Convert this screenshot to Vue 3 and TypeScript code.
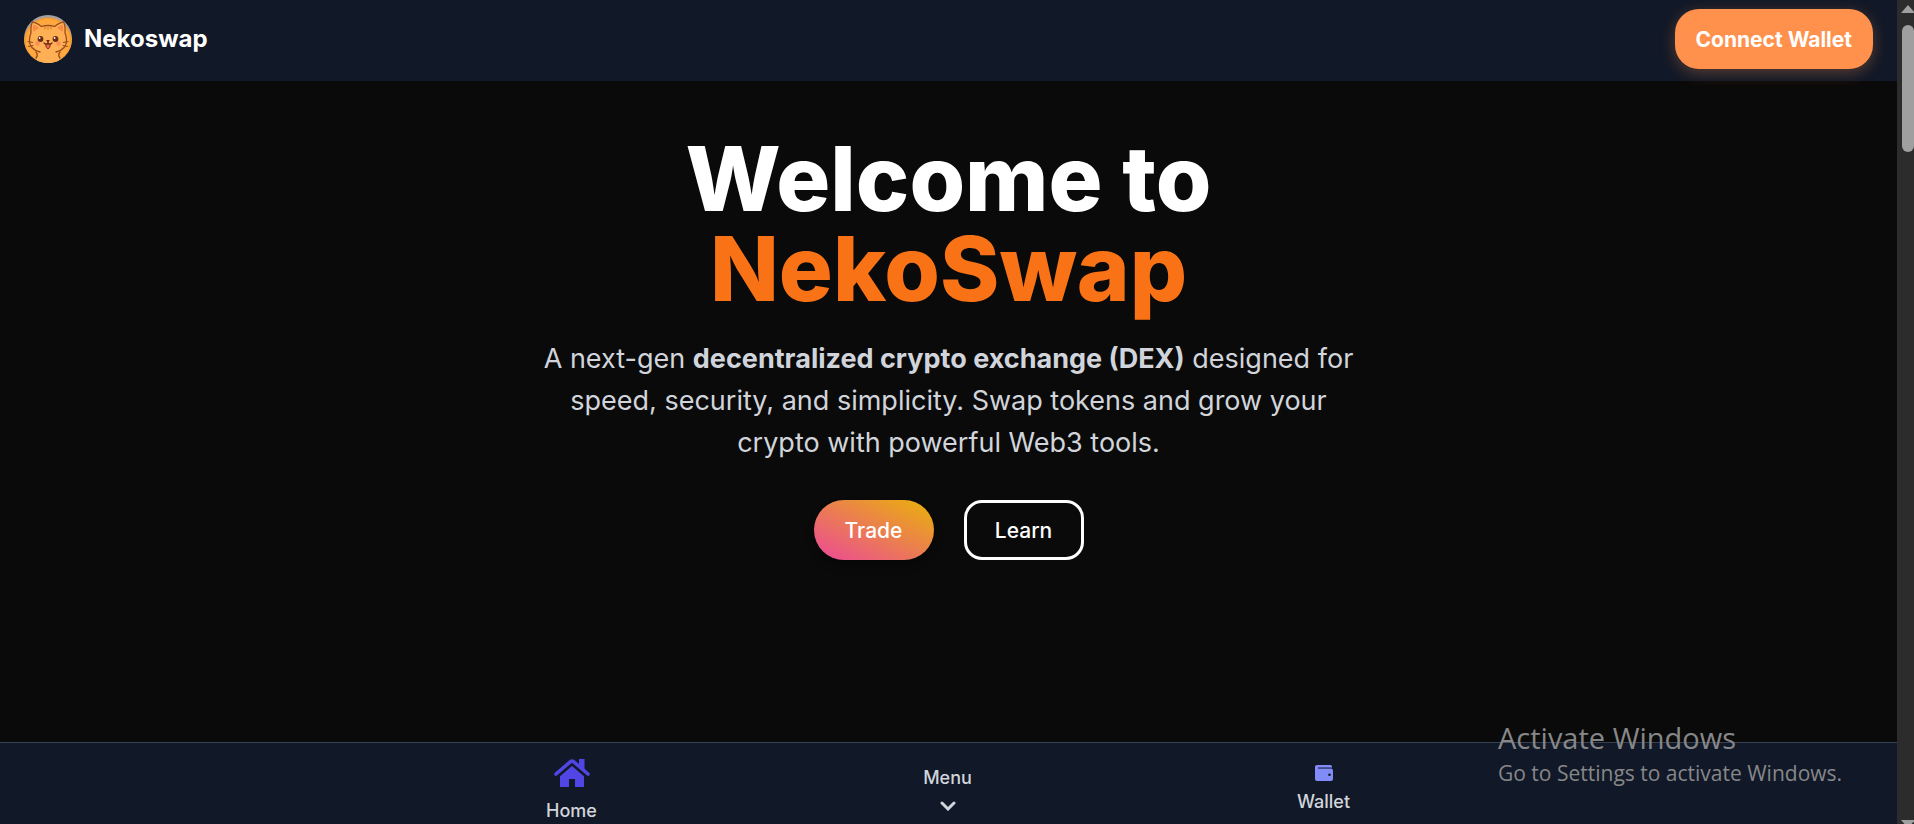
<script setup lang="ts">
interface NavItem {
  id: string
  label: string
}

const navItems: NavItem[] = [
  { id: 'home', label: 'Home' },
  { id: 'menu', label: 'Menu' },
  { id: 'wallet', label: 'Wallet' },
]
</script>

<template>
  <div class="shell">
    <div class="page">
      <header class="topbar">
        <a class="brand" href="#">
          <svg class="logo" viewBox="0 0 48 48" aria-hidden="true">
            <defs>
              <clipPath id="logo-clip"><circle cx="24" cy="24" r="24" /></clipPath>
            </defs>
            <g clip-path="url(#logo-clip)">
              <rect width="48" height="48" fill="#a3a09d" />
              <circle cx="24" cy="26.500" r="24" fill="#f99a30" />
              <circle cx="24" cy="26" r="22" fill="#ffa840" />
              <path d="M12 48 Q14 42 12 37 H36 Q34 42 36 48Z" fill="#ffb055" />
              <path d="M12 43 Q14.500 40 12 37 M36 43 Q33.500 40 36 37" fill="none" stroke="#9a4e1a" stroke-width="1.400" stroke-linecap="round" />
              <path d="M16 37 Q5 34 5.500 25 Q5.500 21 7 18 Q6.500 11 8.500 6.800 Q13.500 8 17.500 11.500 Q24 9.500 30.500 11.500 Q34.500 8 39.500 6.800 Q41.500 11 41 18 Q42.500 21 42.500 25 Q43 34 32 37Z" fill="#ffb055" />
              <path d="M16 37 Q5 34 5.500 25 Q5.500 21 7 18 Q6.500 11 8.500 6.800 Q13.500 8 17.500 11.500 Q24 9.500 30.500 11.500 Q34.500 8 39.500 6.800 Q41.500 11 41 18 Q42.500 21 42.500 25 Q43 34 32 37" fill="none" stroke="#9a4e1a" stroke-width="1.300" stroke-linejoin="round" stroke-linecap="round" />
              <path d="M9 17 Q8.500 12 9.500 9.500 Q13 10.500 15 13Z M39 17 Q39.500 12 38.500 9.500 Q35 10.500 33 13Z" fill="#fb8a48" />
              <path d="M21 12 V14.500 M24 11.500 V15 M27 12 V14.500" fill="none" stroke="#e8842a" stroke-width="1.300" />
              <circle cx="13.500" cy="28.500" r="2.200" fill="#ff8a5a" />
              <circle cx="34.500" cy="28.500" r="2.200" fill="#ff8a5a" />
              <circle cx="16.500" cy="24" r="2.900" fill="#6b2d12" />
              <circle cx="31.500" cy="24" r="2.900" fill="#6b2d12" />
              <circle cx="15.600" cy="23" r="0.900" fill="#fff" />
              <circle cx="30.600" cy="23" r="0.900" fill="#fff" />
              <path d="M21.500 29 Q22 33.500 24 34 Q26 33.500 26.500 29Z" fill="#f2604a" stroke="#6b2d12" stroke-width="0.800" />
              <path d="M23 25.500 H25 L24 27Z M20 28 Q22.500 30.500 24 27.500 Q25.500 30.500 28 28" fill="none" stroke="#6b2d12" stroke-width="1.200" stroke-linejoin="round" stroke-linecap="round" />
              <path d="M4 26.500 L8.500 27.500 M4.500 31.500 L9 30.500 M44 26.500 L39.500 27.500 M43.500 31.500 L39 30.500" stroke="#9a4e1a" stroke-width="1.200" stroke-linecap="round" />
            </g>
          </svg>
          <span>Nekoswap</span>
        </a>
        <button class="connect" type="button">Connect Wallet</button>
      </header>

      <main class="hero">
        <h1>Welcome to<br /><span class="accent">NekoSwap</span></h1>
        <p>
          A next-gen <strong>decentralized crypto exchange (DEX)</strong> designed for
          speed, security, and simplicity. Swap tokens and grow your crypto with
          powerful Web3 tools.
        </p>
        <div class="actions">
          <button class="trade" type="button">Trade</button>
          <button class="learn" type="button">Learn</button>
        </div>
      </main>

      <nav class="bottom" aria-label="Main">
        <div class="items">
          <button v-for="item in navItems" :key="item.id" type="button" :class="['item', item.id]">
            <svg v-if="item.id === 'home'" class="home-icon" viewBox="0 0 36 28" aria-hidden="true">
              <path d="M2 15 L16.500 2.700 Q18 1.500 19.500 2.700 L34 15" fill="none" stroke="#4f46e5" stroke-width="3.600" stroke-linecap="round" stroke-linejoin="round" />
              <path d="M25 0 H30.500 V11 L25 6.500Z" fill="#4f46e5" />
              <path d="M18 7 L30 17.200 V28 H21 V20 H15 V28 H6 V17.200Z" fill="#4f46e5" />
            </svg>
            <svg v-if="item.id === 'wallet'" class="wallet-icon" viewBox="0 0 18 16" aria-hidden="true">
              <path d="M2 0 H15.500 Q17 0 17 1.500 V2 H3 V3.800 H16 Q18 3.800 18 5.500 V14 Q18 16 16 16 H2 Q0 16 0 14 V2 Q0 0 2 0Z" fill="#818cf8" />
              <path d="M3 2 H17 V3.800 H3Z" fill="#4a5196" />
              <circle cx="14.500" cy="9.700" r="1.300" fill="#111827" />
            </svg>
            <span>{{ item.label }}</span>
            <svg v-if="item.id === 'menu'" class="chevron" viewBox="0 0 16 10" aria-hidden="true">
              <path d="M2 2 L8 8 L14 2" fill="none" stroke="#d1d5db" stroke-width="3" stroke-linecap="round" stroke-linejoin="miter" />
            </svg>
          </button>
        </div>
      </nav>
    </div>

    <div class="scrollbar" aria-hidden="true">
      <svg class="arrow" viewBox="0 0 13 8"><path d="M0 8 L7 0 L14 8Z" fill="#9f9f9f" /></svg>
      <div class="thumb"></div>
      <svg class="arrow down" viewBox="0 0 13 4"><path d="M0 0 H14 L7 8Z" fill="#9f9f9f" /></svg>
    </div>

    <aside class="activation">
      <div class="activation-title">Activate Windows</div>
      <div class="activation-text">Go to Settings to activate Windows.</div>
    </aside>
  </div>
</template>

<style>
body {
  margin: 0;
  background: #0a0a0a;
}
</style>

<style scoped>
.shell {
  position: relative;
  display: flex;
  height: 100vh;
  overflow: hidden;
  font-family: Inter, "Liberation Sans", sans-serif;
  color: #fff;
}

.page {
  flex: 1;
  min-width: 0;
  display: flex;
  flex-direction: column;
  background: #0a0a0a;
}

button {
  font-family: inherit;
  margin: 0;
  cursor: pointer;
}

.topbar {
  display: flex;
  align-items: center;
  justify-content: space-between;
  padding: 9px 24px 12px;
  background: #111827;
}

.brand {
  display: flex;
  align-items: center;
  gap: 12px;
  color: #fff;
  text-decoration: none;
  font-size: 24px;
  line-height: 36px;
  font-weight: 700;
}

.logo {
  width: 48px;
  height: 48px;
}

.connect {
  height: 60px;
  padding: 0 21px;
  border: 0;
  border-radius: 24px;
  background: #ff914d;
  color: #fff;
  font-size: 21px;
  font-weight: 700;
  box-shadow: 0 4px 15px rgba(255, 145, 77, 0.3);
}

.hero {
  flex: 1;
  display: flex;
  flex-direction: column;
  align-items: center;
  padding: 53px 24px 0;
  text-align: center;
}

h1 {
  margin: 0;
  font-size: 90px;
  line-height: 90px;
  font-weight: 800;
}

.accent {
  color: #f97316;
}

p {
  max-width: 840px;
  margin: 24px 0 0;
  color: #d1d5db;
  font-size: 27px;
  line-height: 42px;
}

.actions {
  display: flex;
  gap: 30px;
  margin-top: 36px;
}

.actions button {
  width: 120px;
  height: 60px;
  padding: 0;
  color: #fff;
  font-size: 21px;
  font-weight: 500;
}

.trade {
  border: 0;
  border-radius: 30px;
  background: linear-gradient(to top right, #ec4899, #eab308);
  box-shadow: 0 6px 9px rgba(0, 0, 0, 0.3);
}

.learn {
  border: 3px solid #fff;
  border-radius: 18px;
  background: transparent;
}

.bottom {
  border-top: 1px solid #374151;
  background: #111827;
}

.items {
  display: grid;
  grid-template-columns: repeat(3, 1fr);
  max-width: 1128px;
  height: 81px;
  margin: 0 auto;
  padding-right: 2px;
}

.item {
  display: flex;
  flex-direction: column;
  align-items: center;
  padding: 0;
  border: 0;
  background: transparent;
  color: #d1d5db;
  font-size: 18px;
  line-height: 24px;
  font-weight: 500;
}

.home {
  padding-top: 16px;
  gap: 12px;
}

.menu {
  padding-top: 23px;
  gap: 11px;
}

.wallet {
  padding-top: 22px;
  gap: 9px;
}

.home-icon {
  width: 36px;
  height: 28px;
}

.wallet-icon {
  width: 18px;
  height: 16px;
}

.chevron {
  width: 16px;
  height: 10px;
}

.scrollbar {
  width: 17px;
  box-sizing: border-box;
  flex: none;
  display: flex;
  flex-direction: column;
  align-items: flex-end;
  padding-top: 5px;
  background: #2c2c2c;
}

.arrow {
  width: 13px;
  height: 8px;
}

.arrow.down {
  height: 4px;
  margin-top: auto;
}

.thumb {
  width: 12px;
  height: 127px;
  margin-top: 12px;
  border-radius: 6px;
  background: #9f9f9f;
}

.activation {
  position: absolute;
  right: 73px;
  bottom: 37px;
  width: 343px;
  color: #868789;
  font-family: "Open Sans", "Noto Sans", sans-serif;
  white-space: nowrap;
}

.activation-title {
  font-size: 29px;
  line-height: 42px;
}

.activation-text {
  font-size: 21px;
  line-height: 28px;
}
</style>
